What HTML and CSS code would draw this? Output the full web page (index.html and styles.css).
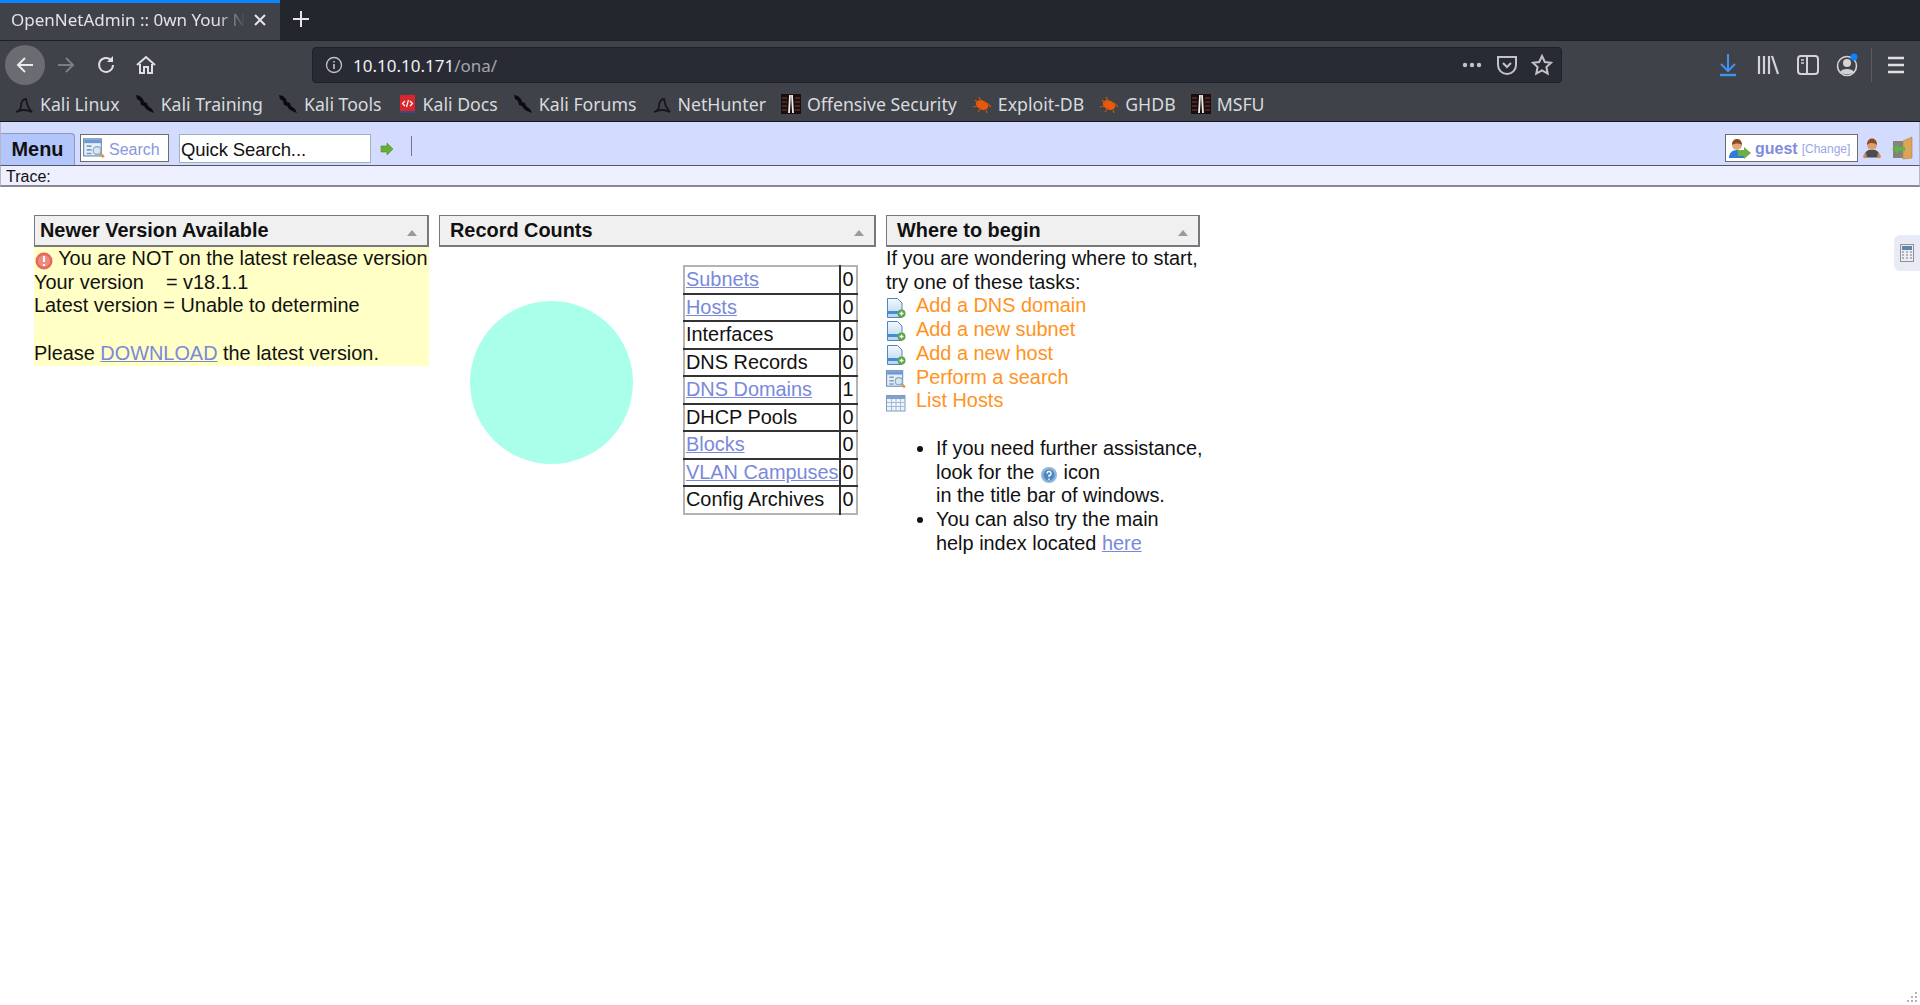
FILE: index.html
```html
<!DOCTYPE html>
<html>
  <head>
    <meta charset="UTF-8">
    <title>OpenNetAdmin :: 0wn Your Network</title>
    <link rel="stylesheet" href="styles.css">
  </head>
  <body>
    <svg class="icon-defs" width="0" height="0">
      <defs>
        <linearGradient id="doc-fill" x1="0" y1="0" x2="0" y2="1">
          <stop offset="0" stop-color="#f4f8fd"/>
          <stop offset="1" stop-color="#b9d4ee"/>
        </linearGradient>
        <symbol id="kali-dragon" viewBox="0 0 20 20">
          <path d="M1 1l4 1 3 3 1 3 3 1 1 3 4 3 2 4-5-2-3-2-2-3-3-1-1-4-3-2z" fill="#0c0c0e"/>
        </symbol>
        <symbol id="kali-logo" viewBox="0 0 20 20">
          <path d="M2 18c3-1 5-2 5-6 0-4 2-7 5-7 1 4 1 7 3 9 1 2 2 3 3 4-3-1-5-2-8-2-3 0-5 1-8 2z" fill="none" stroke="#17171a" stroke-width="1.800"/>
        </symbol>
        <symbol id="offsec" viewBox="0 0 20 20">
          <rect width="20" height="20" fill="#1c0d0d"/>
          <path d="M1 4h5M1 8h5M1 12h5M1 16h5M14 4h5M14 8h5M14 12h5M14 16h5" stroke="#7a4444" stroke-width="1.200"/>
          <path d="M9 1L8 19M11 1l1 18" stroke="#eeeeee" stroke-width="1.800"/>
        </symbol>
        <symbol id="bug" viewBox="0 0 20 20">
          <ellipse cx="10" cy="11" rx="6.500" ry="4.500" fill="#e8590c" transform="rotate(25 10 11)"/>
          <path d="M3 6l3 3M7 3l2 4M1 13l5-1M6 18l3-4M14 16l1 3M15 9l4 4" stroke="#c9530f" stroke-width="1.200"/>
        </symbol>
        <symbol id="search-window" viewBox="0 0 18 18">
          <rect x=".5" y="1.500" width="14.500" height="14" fill="#e6eef8" stroke="#6d92bf"/>
          <rect x="1" y="2" width="14" height="3" fill="#6d9ad0"/>
          <path d="M3 7.500h4M3 10.500h4M3 13.500h4" stroke="#7d9cc2" stroke-width="1.400"/>
          <circle cx="11.500" cy="11" r="3.200" fill="#d4e6f6" stroke="#8aa7c8"/>
          <path d="M14 13.500l3 3" stroke="#d69a4e" stroke-width="2.200"/>
        </symbol>
        <symbol id="doc-add" viewBox="0 0 20 20">
          <path d="M1.500 .500h10l4.500 4.500v14.500H1.500z" fill="url(#doc-fill)" stroke="#4f86c0"/>
          <rect x="2" y="13" width="14" height="3" fill="#3f8fd6"/>
          <circle cx="15.500" cy="15.500" r="4" fill="#5aa545"/>
          <path d="M13.500 15.500h4M15.500 13.500v4" stroke="#fff" stroke-width="1.300"/>
        </symbol>
        <symbol id="host-list" viewBox="0 0 20 20">
          <rect x=".5" y="2.500" width="18.500" height="15.500" fill="#eef3fa" stroke="#7d9cc2"/>
          <rect x="1" y="3" width="18" height="3" fill="#7fa3d0"/>
          <path d="M1 9.500h18M1 13.500h18M5.500 6v12M10 6v12M14.500 6v12" stroke="#a3bad6"/>
        </symbol>
        <symbol id="person" viewBox="0 0 20 20">
          <path d="M2 19.500c0-5 3-8 8-8s8 3 8 8z" fill="#4c4c50"/>
          <circle cx="10" cy="7" r="5" fill="#d9a070"/>
          <path d="M5 7c0-4 2-6.500 5-6.500s5 2.500 5 6.500c-2-2-7-3-10 0z" fill="#8a4a22"/>
          <path d="M1 19.500c0-2 1-4 3-5l1 5zM19 19.500c0-2-1-4-3-5l-1 5z" fill="#cf8a4a"/>
        </symbol>
      </defs>
    </svg>

    <!-- Browser -->
    <div class="tab-strip">
      <div class="tab">
        <span class="tab-title">OpenNetAdmin :: 0wn Your N</span>
        <svg class="tab-close" width="14" height="14" viewBox="0 0 14 14"><path d="M2 2l10 10M12 2L2 12" stroke="#e6e6e8" stroke-width="2"/></svg>
      </div>
      <svg class="new-tab" width="18" height="18" viewBox="0 0 18 18"><path d="M9 1v16M1 9h16" stroke="#e6e6e8" stroke-width="2"/></svg>
    </div>

    <div class="nav-bar">
      <div class="nav-btn nav-back">
        <svg width="20" height="20" viewBox="0 0 20 20"><path d="M18 10H3M10 3l-7 7 7 7" fill="none" stroke="#e9e9ea" stroke-width="2"/></svg>
      </div>
      <div class="nav-btn">
        <svg width="20" height="20" viewBox="0 0 20 20"><path d="M2 10h15M10 3l7 7-7 7" fill="none" stroke="#7c7e83" stroke-width="2"/></svg>
      </div>
      <div class="nav-btn">
        <svg width="20" height="20" viewBox="0 0 20 20"><path d="M17 10a7 7 0 1 1-2-5" fill="none" stroke="#e0e0e2" stroke-width="2"/><path d="M17 1v6h-6z" fill="#e0e0e2"/></svg>
      </div>
      <div class="nav-btn">
        <svg width="20" height="20" viewBox="0 0 20 20"><path d="M1 10l9-8 9 8M4 9v9h4v-6h4v6h4V9" fill="none" stroke="#e0e0e2" stroke-width="2"/></svg>
      </div>

      <div class="url-bar">
        <svg class="url-info" width="18" height="18" viewBox="0 0 18 18"><circle cx="9" cy="9" r="7.500" fill="none" stroke="#c2c3c6" stroke-width="1.300"/><path d="M9 8v5M9 5v1.500" stroke="#c2c3c6" stroke-width="1.600"/></svg>
        <span class="url-host">10.10.10.171</span><span class="url-path">/ona/</span>
        <div class="url-actions">
          <svg width="22" height="8" viewBox="0 0 22 8"><circle cx="4" cy="4" r="2.200" fill="#c2c3c6"/><circle cx="11" cy="4" r="2.200" fill="#c2c3c6"/><circle cx="18" cy="4" r="2.200" fill="#c2c3c6"/></svg>
          <svg width="22" height="22" viewBox="0 0 22 22"><path d="M2 3h18v8a9 9 0 0 1-18 0z" fill="none" stroke="#c2c3c6" stroke-width="2"/><path d="M7 9l4 4 4-4" fill="none" stroke="#c2c3c6" stroke-width="2"/></svg>
          <svg width="22" height="22" viewBox="0 0 22 22"><path d="M11 2l2.800 6 6.200.7-4.600 4.300 1.300 6.500L11 16.300 5.300 19.500 6.600 13 2 8.700 8.200 8z" fill="none" stroke="#c2c3c6" stroke-width="2"/></svg>
        </div>
      </div>

      <div class="nav-right">
        <div class="nav-btn">
          <svg width="20" height="24" viewBox="0 0 20 24"><path d="M10 1v16M3 11l7 7 7-7" fill="none" stroke="#3d95ec" stroke-width="2"/><path d="M2 22h16" stroke="#3d95ec" stroke-width="2.400"/></svg>
        </div>
        <div class="nav-btn">
          <svg width="22" height="22" viewBox="0 0 22 22"><path d="M2 2v18M7 2v18M12 2v18M15 2l6 18" fill="none" stroke="#d4d4d6" stroke-width="2.200"/></svg>
        </div>
        <div class="nav-btn">
          <svg width="22" height="20" viewBox="0 0 22 20"><rect x="1" y="1" width="20" height="18" rx="3" fill="none" stroke="#d4d4d6" stroke-width="2"/><path d="M10 1v18" stroke="#d4d4d6" stroke-width="2"/><path d="M4 5h3M4 8h3" stroke="#d4d4d6" stroke-width="1.500"/></svg>
        </div>
        <div class="nav-btn nav-account">
          <svg width="24" height="24" viewBox="0 0 24 24"><circle cx="11" cy="13" r="9.500" fill="none" stroke="#d4d4d6" stroke-width="1.600"/><circle cx="11" cy="10" r="4" fill="#d4d4d6"/><path d="M4 19c2-4 12-4 14 0-3 3-11 3-14 0z" fill="#d4d4d6"/><circle cx="18" cy="4" r="3.500" fill="#0a84ff"/></svg>
        </div>
        <div class="nav-sep"></div>
        <div class="nav-btn nav-menu">
          <svg width="20" height="18" viewBox="0 0 20 18"><path d="M2 2h16M2 9h16M2 16h16" stroke="#e0e0e2" stroke-width="2.400"/></svg>
        </div>
      </div>
    </div>

    <div class="bookmarks">
      <div class="bookmark"><svg><use href="#kali-logo"/></svg>Kali Linux</div>
      <div class="bookmark"><svg><use href="#kali-dragon"/></svg>Kali Training</div>
      <div class="bookmark"><svg><use href="#kali-dragon"/></svg>Kali Tools</div>
      <div class="bookmark"><svg viewBox="0 0 20 20"><rect x="3" y="1" width="15" height="16" fill="#d8262c"/><rect x="3" y="17" width="15" height="2" fill="#3a4a7a"/><path d="M8 7l-2.500 2.500L8 12M13 7l2.500 2.500L13 12M11.500 6l-2 7" fill="none" stroke="#fff" stroke-width="1.200"/></svg>Kali Docs</div>
      <div class="bookmark"><svg><use href="#kali-dragon"/></svg>Kali Forums</div>
      <div class="bookmark"><svg><use href="#kali-logo"/></svg>NetHunter</div>
      <div class="bookmark"><svg><use href="#offsec"/></svg>Offensive Security</div>
      <div class="bookmark"><svg><use href="#bug"/></svg>Exploit-DB</div>
      <div class="bookmark"><svg><use href="#bug"/></svg>GHDB</div>
      <div class="bookmark"><svg><use href="#offsec"/></svg>MSFU</div>
    </div>

    <!-- Application -->
    <div class="ona-bar">
      <div class="menu-tab">Menu</div>
      <div class="search-btn"><svg width="22" height="22"><use href="#search-window"/></svg><span class="search-label">Search</span></div>
      <input class="quick-search" type="text" value="Quick Search...">
      <svg class="go-arrow" width="14" height="14" viewBox="0 0 14 14"><path d="M1 4h6V1l6 6-6 6v-3H1z" fill="#64b034" stroke="#4c8c26" stroke-width=".6"/></svg>
      <div class="bar-sep"></div>
      <div class="login-box">
        <svg width="24" height="24" viewBox="0 0 24 24"><path d="M1 21c0-5 3-8 8-8s7 3 7 8z" fill="#2f7fd0"/><circle cx="9" cy="8" r="5" fill="#e0a878"/><path d="M4 8c0-5 3-6 5-6s5 1 5 6c-3-2-7-2-10 0z" fill="#8a4a22"/><path d="M10 13h6v-3l7 6-7 6v-3h-6z" fill="#6cae4a"/></svg>
        <span class="login-name">guest</span>
        <span class="login-change">[Change]</span>
      </div>
      <svg class="bar-icon" width="20" height="22"><use href="#person"/></svg>
      <svg class="bar-icon bar-logout" width="22" height="24" viewBox="0 0 22 24"><rect x="2" y="5" width="14" height="17" fill="#83837c"/><path d="M12 5l9-4v21l-9 1z" fill="#d9a55c" stroke="#b4823c" stroke-width=".6"/><path d="M1 13l6-5v3h7v4H7v3z" fill="#62b04a"/></svg>
    </div>
    <div class="trace-bar">Trace:</div>

    <div class="desktop">
      <div class="window window-version">
        <div class="win-title">Newer Version Available<span class="win-arrow"></span></div>
        <div class="win-body notice">
          <svg class="notice-icon" width="18" height="18" viewBox="0 0 18 18"><circle cx="9" cy="9" r="8.500" fill="#e4685c"/><circle cx="9" cy="9" r="6" fill="#ee8a7e"/><path d="M9 4v6M9 12v2" stroke="#fff" stroke-width="2.200"/></svg>
          You are NOT on the latest release version<br>
          Your version &nbsp;&nbsp; = v18.1.1<br>
          Latest version = Unable to determine<br>
          <br>
          Please <a href="#">DOWNLOAD</a> the latest version.
        </div>
      </div>

      <div class="window window-counts">
        <div class="win-title">Record Counts<span class="win-arrow"></span></div>
        <div class="counts">
          <div class="pie"></div>
          <table class="count-table">
            <tr><td><a href="#">Subnets</a></td><td>0</td></tr>
            <tr><td><a href="#">Hosts</a></td><td>0</td></tr>
            <tr><td>Interfaces</td><td>0</td></tr>
            <tr><td>DNS Records</td><td>0</td></tr>
            <tr><td><a href="#">DNS Domains</a></td><td>1</td></tr>
            <tr><td>DHCP Pools</td><td>0</td></tr>
            <tr><td><a href="#">Blocks</a></td><td>0</td></tr>
            <tr><td><a href="#">VLAN Campuses</a></td><td>0</td></tr>
            <tr><td>Config Archives</td><td>0</td></tr>
          </table>
        </div>
      </div>

      <div class="window window-begin">
        <div class="win-title">Where to begin<span class="win-arrow"></span></div>
        <div class="win-body">
          If you are wondering where to start,<br>
          try one of these tasks:
          <div class="task"><svg><use href="#doc-add"/></svg>Add a DNS domain</div>
          <div class="task"><svg><use href="#doc-add"/></svg>Add a new subnet</div>
          <div class="task"><svg><use href="#doc-add"/></svg>Add a new host</div>
          <div class="task"><svg viewBox="0 0 18 18"><use href="#search-window"/></svg>Perform a search</div>
          <div class="task"><svg><use href="#host-list"/></svg>List Hosts</div>
          <ul class="help-list">
            <li>If you need further assistance,<br>look for the <svg class="help-icon" width="18" height="18" viewBox="0 0 18 18"><circle cx="9" cy="9" r="8" fill="#8fb4da"/><circle cx="9" cy="9" r="5.500" fill="#4f86bf"/><path d="M7 7.500a2 2 0 1 1 2 2V11M9 12.500v1.500" fill="none" stroke="#fff" stroke-width="1.300"/></svg> icon<br>in the title bar of windows.</li>
            <li>You can also try the main<br>help index located <a href="#">here</a></li>
          </ul>
        </div>
      </div>
    </div>

    <div class="side-tab">
      <svg width="14" height="18" viewBox="0 0 14 18"><rect x=".5" y=".5" width="13" height="17" fill="#eceef2" stroke="#8e9298"/><rect x="2" y="2" width="10" height="4" fill="#5f84ad"/><path d="M2 8h2M6 8h2M10 8h2M2 11h2M6 11h2M10 11h2M2 14h2M6 14h2M10 14h2" stroke="#9a9ea6" stroke-width="1.500"/></svg>
    </div>
    <svg class="resize-grip" width="12" height="12" viewBox="0 0 12 12"><g fill="#b4b4b4"><rect x="9" y="1" width="2" height="2"/><rect x="5" y="5" width="2" height="2"/><rect x="9" y="5" width="2" height="2"/><rect x="1" y="9" width="2" height="2"/><rect x="5" y="9" width="2" height="2"/><rect x="9" y="9" width="2" height="2"/></g></svg>
  </body>
</html>
```

FILE: styles.css
```css
/* Page */
html, body {
  margin: 0;
  height: 1005px;
  overflow: hidden;
  background: #fff;
}

body {
  position: relative;
  font-family: "Liberation Sans", Arial, sans-serif;
  font-size: 19.900px;
  color: #111;
}

.icon-defs {
  position: absolute;
}

a {
  color: #7a88dc;
}

/* Browser tabs */
.tab-strip {
  display: flex;
  align-items: center;
  height: 40px;
  background: #24262e;
  font-family: "Noto Sans", sans-serif;
}

.tab {
  display: flex;
  align-items: center;
  box-sizing: border-box;
  width: 280px;
  height: 40px;
  padding: 0 13px 4px 11px;
  background: #3f4249;
  border-top: 3px solid #0a84ff;
  color: #e2e3e5;
  font-size: 17px;
}

.tab-title {
  flex: 1;
  white-space: nowrap;
  -webkit-mask-image: linear-gradient(to right, #000 85%, transparent 97%);
  mask-image: linear-gradient(to right, #000 85%, transparent 97%);
}

.new-tab {
  margin: 0 0 2px 12px;
}

/* Browser toolbar */
.nav-bar {
  display: flex;
  align-items: center;
  box-sizing: border-box;
  height: 43px;
  padding: 0 4px 0 5px;
  background: #3f4249;
  border-top: 1px solid #1e2026;
}

.nav-btn {
  display: flex;
  align-items: center;
  justify-content: center;
  width: 40px;
  height: 40px;
  flex: none;
  margin-top: 5px;
}

.nav-back + .nav-btn {
  margin-left: 1px;
}

.nav-back {
  background: #6a6c71;
  border-radius: 50%;
}

.url-bar {
  display: flex;
  align-items: center;
  box-sizing: border-box;
  flex: 1;
  height: 36px;
  margin: 6px 146px 0 146px;
  padding: 0 8px 0 12px;
  background: #292b34;
  border: 1px solid #1e2026;
  border-radius: 4px;
  font-family: "Noto Sans", sans-serif;
  font-size: 17px;
}

.url-info {
  margin-right: 10px;
}

.url-host {
  color: #f0f0f2;
}

.url-path {
  color: #a4a5a9;
}

.url-actions {
  display: flex;
  align-items: center;
  gap: 13px;
  margin-left: auto;
}

.nav-right {
  display: flex;
  align-items: center;
}

.nav-sep {
  width: 1px;
  height: 34px;
  margin: 5px 0 0 3px;
  background: #5a5c62;
}

.nav-menu {
  margin-left: 4px;
}

/* Bookmarks */
.bookmarks {
  display: flex;
  align-items: center;
  gap: 15px;
  height: 39px;
  padding: 3px 0 0 14px;
  box-sizing: border-box;
  background: #3f4249;
  border-bottom: 1px solid #17181c;
  color: #d8dade;
  font-family: "Noto Sans", sans-serif;
  font-size: 17.700px;
}

.bookmark {
  display: flex;
  align-items: center;
  gap: 6px;
  white-space: nowrap;
}

.bookmark svg {
  width: 20px;
  height: 20px;
}

/* OpenNetAdmin menu bar */
.ona-bar {
  display: flex;
  align-items: flex-end;
  box-sizing: border-box;
  height: 44px;
  background: #d3dbfe;
  border: 1px solid #b4b8c8;
  border-bottom: 1px solid #55575e;
  border-top: 0;
}

.menu-tab {
  box-sizing: border-box;
  width: 74px;
  height: 32px;
  background: #b2c6fb;
  border: 1px solid #8d9ab8;
  border-bottom: 0;
  border-left: 0;
  border-radius: 0 4px 0 0;
  font-weight: bold;
  line-height: 31px;
  text-align: center;
}

.search-btn {
  display: flex;
  align-items: center;
  gap: 4px;
  box-sizing: border-box;
  width: 89px;
  height: 28px;
  margin: 0 0 3px 5px;
  padding-left: 2px;
  background: #fff;
  border: 1px solid #6d6d6d;
  color: #8a96e0;
  font-size: 16px;
}

.search-label {
  padding-top: 3px;
}

.quick-search {
  box-sizing: border-box;
  width: 192px;
  height: 29px;
  margin: 0 0 2px 10px;
  padding: 2px 1px 0;
  background: #fff;
  border: 1px solid #9ab4c4;
  color: #111;
  font-family: "Liberation Sans", sans-serif;
  font-size: 18.500px;
  letter-spacing: -.1px;
}

.go-arrow {
  margin: 0 0 9px 9px;
}

.bar-sep {
  width: 1px;
  height: 20px;
  margin: 0 0 9px 17px;
  background: #77797f;
}

.login-box {
  display: flex;
  align-items: center;
  box-sizing: border-box;
  width: 133px;
  height: 28px;
  margin: 0 0 3px auto;
  padding: 2px 0 0 2px;
  background: #fff;
  border: 1px solid #6d6d6d;
}

.login-name {
  margin-left: 3px;
  color: #7f8cdc;
  font-size: 16px;
  font-weight: bold;
}

.login-change {
  margin-left: 4px;
  color: #9aa6e6;
  font-size: 12px;
}

.bar-icon {
  margin: 0 0 6px 4px;
}

.bar-logout {
  margin: 0 6px 5px 9px;
}

.trace-bar {
  box-sizing: border-box;
  height: 21px;
  padding-left: 5px;
  background: #eeefff;
  border: 1px solid #b4b8c8;
  border-top: 0;
  border-bottom: 2px solid #888a90;
  font-size: 16px;
  line-height: 21px;
}

/* Windows */
.desktop {
  display: flex;
  align-items: flex-start;
  gap: 10px;
  padding: 28px 0 0 34px;
  line-height: 23.700px;
}

.win-title {
  position: relative;
  box-sizing: border-box;
  height: 32px;
  padding-left: 5px;
  background: #f0f0f0;
  border: 2px solid #77797c;
  border-top-width: 1px;
  border-left-width: 1px;
  font-weight: bold;
  line-height: 29px;
}

.win-arrow {
  position: absolute;
  right: 10px;
  top: 14px;
  border: 5px solid transparent;
  border-top: 0;
  border-bottom: 6px solid #9a9a9a;
}

.window-version {
  width: 395px;
}

.window-counts {
  width: 437px;
}

.window-counts .win-title {
  padding-left: 10px;
}

.window-begin {
  width: 314px;
}

.window-begin .win-title {
  padding-left: 10px;
}

.notice {
  height: 119px;
  background: #ffffc6;
  white-space: nowrap;
}

.notice-icon {
  vertical-align: -5px;
  margin-left: 1px;
}

/* Record counts */
.counts {
  display: flex;
  align-items: flex-start;
}

.pie {
  flex: none;
  width: 163px;
  height: 163px;
  margin: 54px 50px 0 31px;
  background: #aaffea;
  border-radius: 50%;
}

.count-table {
  margin-top: 18px;
  border-collapse: collapse;
  border: 2px solid #b4b4b4;
  white-space: nowrap;
}

.count-table td {
  height: 25.500px;
  padding: 0 0 0 1px;
  border-bottom: 2px solid #333;
  line-height: 23px;
}

.count-table tr:last-child td {
  border-bottom: 0;
}

.count-table td:last-child {
  padding: 0 2px;
  border-left: 2px solid #333;
}

/* Tasks */
.task {
  display: flex;
  align-items: center;
  color: #ff931e;
  white-space: nowrap;
}

.task svg {
  flex: none;
  width: 20px;
  height: 20px;
  margin: 3px 10px 0 0;
}

.help-list {
  margin: 24px 0 0;
  padding-left: 50px;
  white-space: nowrap;
}

.help-icon {
  vertical-align: -5px;
}

/* Right edge */
.side-tab {
  position: absolute;
  right: 0;
  top: 235px;
  display: flex;
  align-items: center;
  justify-content: flex-end;
  box-sizing: border-box;
  width: 26px;
  height: 36px;
  padding-right: 6px;
  background: #e8ebf6;
  border-radius: 6px 0 0 6px;
}

.resize-grip {
  position: absolute;
  right: 2px;
  bottom: 2px;
}
```
